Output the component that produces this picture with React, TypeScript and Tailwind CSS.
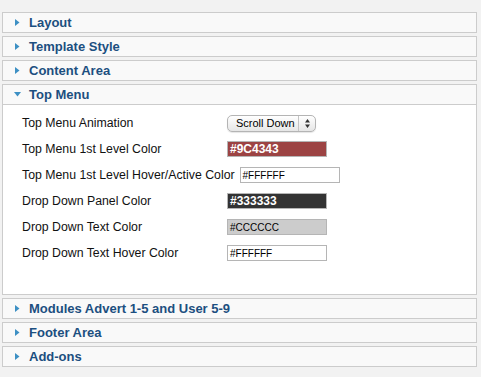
const collapsedTop = ["Layout", "Template Style", "Content Area"];
const collapsedBottom = ["Modules Advert 1-5 and User 5-9", "Footer Area", "Add-ons"];

type Row = {
  label: string;
  kind: "select" | "color";
  value?: string;
  bg?: string;
  dark?: boolean;
};

const rows: Row[] = [
  { label: "Top Menu Animation", kind: "select", value: "Scroll Down" },
  { label: "Top Menu 1st Level Color", kind: "color", value: "#9C4343", bg: "bg-[#9c4343]", dark: true },
  { label: "Top Menu 1st Level Hover/Active Color", kind: "color", value: "#FFFFFF", bg: "bg-white" },
  { label: "Drop Down Panel Color", kind: "color", value: "#333333", bg: "bg-[#333333]", dark: true },
  { label: "Drop Down Text Color", kind: "color", value: "#CCCCCC", bg: "bg-[#cccccc]" },
  { label: "Drop Down Text Hover Color", kind: "color", value: "#FFFFFF", bg: "bg-white" },
];

function Arrow({ open }: { open?: boolean }) {
  return open ? (
    <svg width="7" height="5" viewBox="0 0 7 5" className="mr-[8px] ml-[11px]">
      <path d="M0 0h7L3.5 4.5z" fill="#3d90c4" />
    </svg>
  ) : (
    <svg width="5" height="7" viewBox="0 0 5 7" className="mr-[9px] ml-[12px]">
      <path d="M0 0v7l4.5-3.5z" fill="#3d90c4" />
    </svg>
  );
}

function Header({ title, open }: { title: string; open?: boolean }) {
  return (
    <div className="flex h-[19px] items-center bg-[#f9f9f9]">
      <Arrow open={open} />
      <span className="text-[13px] font-bold text-[#1c4f80]">{title}</span>
    </div>
  );
}

function Collapsed({ title }: { title: string }) {
  return (
    <div className="mb-[3px] border border-[#cccccc]">
      <Header title={title} />
    </div>
  );
}

function Select({ value }: { value: string }) {
  return (
    <div className="flex h-[17px] w-[89px] items-center rounded-[5px] border border-[#b4b4b4] bg-gradient-to-b from-white to-[#e6e6e6] shadow-[0_1px_1px_rgba(0,0,0,0.1)]">
      <span className="flex-1 pl-[8px] text-[11px] text-black">{value}</span>
      <div className="flex h-full w-[17px] items-center justify-center border-l border-[#c4c4c4]">
        <svg width="5" height="9" viewBox="0 0 5 9">
          <path d="M0 3.5L2.5 0 5 3.5z M0 5.5L2.5 9 5 5.5z" fill="#333" />
        </svg>
      </div>
    </div>
  );
}

function ColorInput({ row }: { row: Row }) {
  return (
    <div
      className={`flex h-[16px] w-[100px] items-center border border-[#b5b5b5] pl-[2px] ${row.bg} ${
        row.dark ? "text-[12px] font-bold text-white" : "text-[10px] text-black"
      }`}
    >
      {row.value}
    </div>
  );
}

export default function App() {
  return (
    <div className="min-h-[377px] w-[481px] bg-[#f2f2f2] pt-[12px] pl-[2px] font-['Liberation_Sans',Arial,sans-serif]">
      <div className="w-[475px]">
        {collapsedTop.map((t) => (
          <Collapsed key={t} title={t} />
        ))}
        <div className="mb-[3px] border border-[#cccccc]">
          <div className="border-b border-[#cccccc]">
            <Header title="Top Menu" open />
          </div>
          <div className="h-[189px] bg-white pt-[5px] pl-[19px]">
            {rows.map((r) => (
              <div key={r.label} className="flex h-[26px] items-center">
                <span className="min-w-[205px] pr-[5px] text-[12.3px] text-[#111111]">{r.label}</span>
                {r.kind === "select" ? <Select value={r.value!} /> : <ColorInput row={r} />}
              </div>
            ))}
          </div>
        </div>
        {collapsedBottom.map((t) => (
          <Collapsed key={t} title={t} />
        ))}
      </div>
    </div>
  );
}
